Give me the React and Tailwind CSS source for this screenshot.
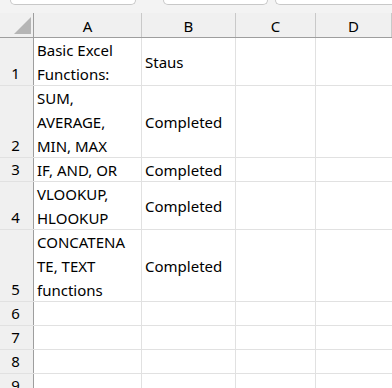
import React from 'react';

const cols = [
  { key: 'A', w: 'w-[108px]' },
  { key: 'B', w: 'w-[94px]' },
  { key: 'C', w: 'w-[80px]' },
  { key: 'D', w: 'flex-1' },
];

const rows = [
  { n: 1, h: 'h-[48px]', a: ['Basic Excel', 'Functions:'], b: 'Staus' },
  { n: 2, h: 'h-[72px]', a: ['SUM,', 'AVERAGE,', 'MIN, MAX'], b: 'Completed' },
  { n: 3, h: 'h-[24px]', a: ['IF, AND, OR'], b: 'Completed' },
  { n: 4, h: 'h-[48px]', a: ['VLOOKUP,', 'HLOOKUP'], b: 'Completed' },
  { n: 5, h: 'h-[72px]', a: ['CONCATENA', 'TE, TEXT', 'functions'], b: 'Completed' },
  { n: 6, h: 'h-[24px]' },
  { n: 7, h: 'h-[24px]' },
  { n: 8, h: 'h-[24px]' },
  { n: 9, h: 'h-[24px]' },
];

export default function App() {
  return (
    <div className="w-[392px] h-[388px] overflow-hidden bg-white text-black text-[15px] leading-[24px]" style={{ fontFamily: '"Noto Sans", sans-serif' }}>
      {/* toolbar strip */}
      <div className="h-[13px] bg-[#f3f3f3] flex overflow-hidden">
        <div className="ml-[10px] w-[126px] h-[5px] bg-white border border-t-0 border-[#c8c8c8] rounded-b-[5px]" />
        <div className="ml-[27px] w-[105px] h-[5px] bg-white border border-t-0 border-[#c8c8c8] rounded-b-[5px]" />
        <div className="ml-[7px] flex-1 h-[5px] bg-white border border-t-0 border-r-0 border-[#c8c8c8] rounded-bl-[5px]" />
      </div>

      {/* column headers */}
      <div className="flex h-[25px] bg-[#f0f0f0] border-b border-[#9e9e9e]">
        <div className="w-[34px] border-r border-[#9e9e9e] relative">
          <svg className="absolute left-[14px] top-[4px]" width="17" height="17" viewBox="0 0 17 17">
            <polygon points="17,0 17,17 0,17" fill="#b5b5b5" />
          </svg>
        </div>
        {cols.map((c) => (
          <div key={c.key} className={`${c.w} flex items-center justify-center border-r border-[#c9c9c9] pt-px`}>
            {c.key}
          </div>
        ))}
      </div>

      {rows.map((r) => (
        <div key={r.n} className={`flex ${r.h} border-b border-[#e1e1e1]`}>
          <div className="w-[34px] bg-[#f0f0f0] border-r border-[#9e9e9e] flex items-end justify-center pr-[2px]">
            {r.n}
          </div>
          <div className="w-[108px] border-r border-[#e1e1e1] pl-[3px] flex flex-col justify-center whitespace-nowrap overflow-hidden">
            {r.a && r.a.map((l, i) => <div key={i}>{l}</div>)}
          </div>
          <div className="w-[94px] border-r border-[#e1e1e1] pl-[3px] flex items-center whitespace-nowrap overflow-hidden">
            {r.b}
          </div>
          <div className="w-[80px] border-r border-[#e1e1e1]" />
          <div className="flex-1" />
        </div>
      ))}
    </div>
  );
}
